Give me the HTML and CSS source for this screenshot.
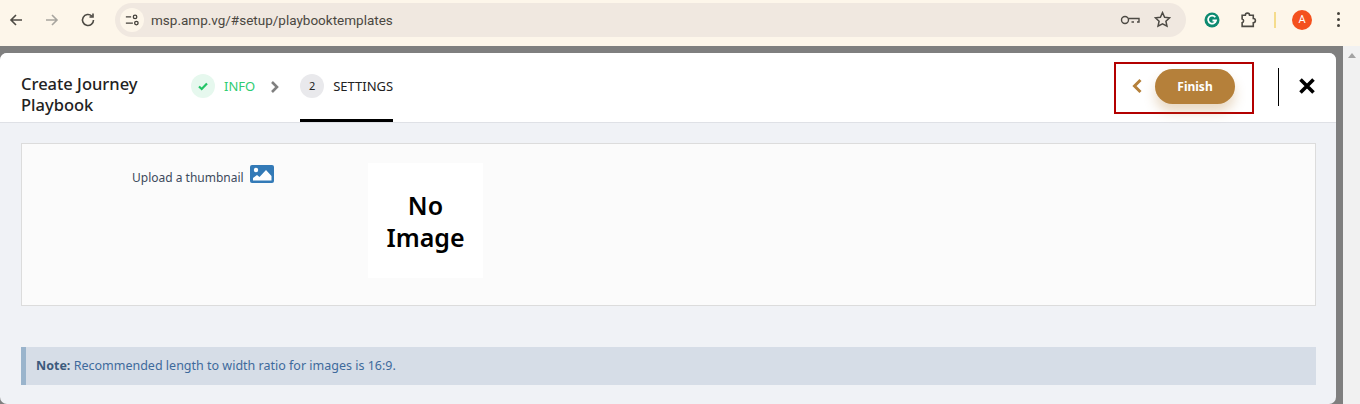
FILE: index.html
```html
<!DOCTYPE html>
<html lang="en">

<head>
  <meta charset="UTF-8">
  <title>Create Journey Playbook</title>
  <link rel="stylesheet" href="styles.css">
</head>

<body>
  <div class="browser-bar">
    <div class="nav-icons">
      <svg class="nav-icon" viewBox="0 0 16 16"><path d="M14 8H3M8 3 3 8l5 5" /></svg>
      <svg class="nav-icon faded" viewBox="0 0 16 16"><path d="M2 8h11M8 3l5 5-5 5" /></svg>
      <svg class="nav-icon" viewBox="0 0 16 16"><path d="M13.5 8A5.5 5.5 0 1 1 11.8 4M13 1.5V5H9.500" /></svg>
    </div>
    <div class="address">
      <span class="site-btn">
        <svg viewBox="0 0 16 16"><path d="M1 4.500h6M1 11.500h8" /><circle cx="11.500" cy="4.500" r="2" /><circle cx="13" cy="11.500" r="2" /></svg>
      </span>
      <span class="url">msp.amp.vg/#setup/playbooktemplates</span>
      <svg class="addr-icon key" viewBox="0 0 20 12"><circle cx="5" cy="6" r="3.500" /><path d="M8.500 4.500H19v3.500h-2M14 8h-2.500" /></svg>
      <svg class="addr-icon star" viewBox="0 0 16 16"><path d="m8 1.500 2 4.400 4.700.5-3.500 3.200 1 4.700L8 12l-4.200 2.300 1-4.700-3.500-3.200L6 5.900z" /></svg>
    </div>
    <div class="ext-icons">
      <svg class="grammarly" viewBox="0 0 16 16"><circle cx="8" cy="8" r="7.500" /><path d="M11.300 5.200A4 4 0 1 0 12 8.500H8.500" /></svg>
      <svg class="puzzle" viewBox="0 0 16 16"><path d="M2 4h3a2 2 0 0 1 4 0h3.500v3a2 2 0 0 1 0 4v3.500H2v-3.500a1.800 1.800 0 0 0 0-3.500z" /></svg>
      <span class="divider"></span>
      <span class="avatar">A</span>
      <span class="dots"><i></i><i></i><i></i></span>
    </div>
  </div>

  <div class="page">
    <div class="modal">
      <div class="modal-head">
        <div class="modal-title">Create Journey Playbook</div>
        <div class="steps">
          <div class="step done">
            <span class="step-badge">
              <svg viewBox="0 0 12 12"><path d="m2 6.500 2.700 2.500L10 3.500" /></svg>
            </span>
            INFO
          </div>
          <svg class="step-arrow" viewBox="0 0 10 14"><path d="m2 2 5 5-5 5" /></svg>
          <div class="step active">
            <span class="step-badge">2</span>
            SETTINGS
          </div>
        </div>
        <div class="head-actions">
          <div class="finish-box">
            <svg class="back" viewBox="0 0 12 16"><path d="M9.500 2 3.500 8l6 6" /></svg>
            <button type="button" class="finish">Finish</button>
          </div>
          <span class="head-sep"></span>
          <svg class="close" viewBox="0 0 18 18"><path d="m2.500 2.500 13 13M15.500 2.500l-13 13" /></svg>
        </div>
      </div>
      <div class="modal-body">
        <div class="card">
          <div class="upload">
            <span>Upload a thumbnail</span>
            <svg viewBox="0 0 24 18"><rect width="24" height="18" rx="2" class="pic-bg" /><circle cx="6" cy="5" r="2.200" class="pic-fg" /><path d="M3 15.500V13l4-3 2.500 2L16 5l5.500 6v4.500z" class="pic-fg" /></svg>
          </div>
          <div class="no-image">No Image</div>
        </div>
        <div class="note"><b>Note:</b> Recommended length to width ratio for images is 16:9.</div>
      </div>
    </div>
    <div class="scrollbar"><span class="scroll-up"></span></div>
  </div>
</body>

</html>
```

FILE: styles.css
```css
body {
  margin: 0;
  height: 404px;
  overflow: hidden;
  font-family: "Noto Sans", Arial, sans-serif;
  color: #212529;
}

/* Browser chrome */
.browser-bar {
  display: flex;
  align-items: center;
  height: 46px;
  box-sizing: border-box;
  padding: 0 0 7px 8px;
  background-color: #fdf6ea;
}

.nav-icons {
  display: flex;
  gap: 20px;
  width: 107px;
}

.nav-icon {
  width: 16px;
  height: 16px;
  fill: none;
  stroke: #4d4a44;
  stroke-width: 1.6;
}

.nav-icon.faded {
  stroke: #a8a59f;
}

.address {
  display: flex;
  align-items: center;
  width: 1071px;
  height: 34px;
  box-sizing: border-box;
  padding: 0 15px 0 5px;
  border-radius: 17px;
  background-color: #f0e8e0;
}

.site-btn {
  display: flex;
  align-items: center;
  justify-content: center;
  width: 24px;
  height: 24px;
  border-radius: 50%;
  background-color: #fdf6ea;
}

.site-btn svg {
  width: 14px;
  height: 14px;
  fill: none;
  stroke: #45423c;
  stroke-width: 1.5;
}

.url {
  flex: 1;
  margin-left: 7px;
  font-family: "Roboto", Arial, sans-serif;
  font-size: 13.500px;
  color: #4a4740;
}

.addr-icon {
  fill: none;
  stroke: #4d4a44;
  stroke-width: 1.4;
}

.addr-icon.key {
  width: 20px;
  height: 12px;
  margin-right: 14px;
}

.addr-icon.star {
  width: 17px;
  height: 17px;
}

.ext-icons {
  display: flex;
  align-items: center;
  margin-left: 18px;
}

.grammarly {
  width: 16px;
  height: 16px;
}

.grammarly circle {
  fill: #0d8a70;
}

.grammarly path {
  fill: none;
  stroke: #fff;
  stroke-width: 1.800;
}

.puzzle {
  width: 17px;
  height: 17px;
  margin-left: 20px;
  fill: none;
  stroke: #4d4a44;
  stroke-width: 1.500;
}

.divider {
  width: 2px;
  height: 16px;
  margin-left: 17px;
  background-color: #f5dc8c;
}

.avatar {
  width: 20px;
  height: 20px;
  margin-left: 16px;
  border-radius: 50%;
  background-color: #f4511e;
  color: #fff;
  font-family: "Roboto", Arial, sans-serif;
  font-size: 11px;
  line-height: 20px;
  text-align: center;
}

.dots {
  display: flex;
  flex-direction: column;
  gap: 3px;
  margin-left: 25px;
}

.dots i {
  width: 3px;
  height: 3px;
  border-radius: 50%;
  background-color: #45423c;
}

/* Dimmed page with the dialog on top */
.page {
  display: flex;
  height: 358px;
  background-color: #7f7f7f;
}

.modal {
  width: 1336px;
  height: 351px;
  margin: 7px 7px 0 0;
  flex-shrink: 0;
  box-sizing: border-box;
  margin-left: 0;
  border-radius: 7px;
  overflow: hidden;
  background-color: #f0f2f6;
}

.scrollbar {
  flex: 1;
  background-color: #f1f1f1;
  margin-top: 0;
}

.scroll-up {
  display: block;
  width: 0;
  margin: 7px auto 0;
  border-left: 4px solid transparent;
  border-right: 4px solid transparent;
  border-bottom: 5px solid #a3a3a3;
}

.modal-head {
  display: flex;
  height: 70px;
  box-sizing: border-box;
  padding-left: 21px;
  background-color: #fff;
  border-bottom: 1px solid #dfe1e6;
}

.modal-title {
  width: 170px;
  margin-top: 20px;
  font-size: 16.500px;
  font-weight: 500;
  line-height: 21px;
  color: #222;
}

.steps {
  display: flex;
  height: 69px;
}

.step {
  display: flex;
  align-items: center;
  gap: 9px;
  height: 69px;
  box-sizing: border-box;
  padding-bottom: 4px;
  font-size: 13px;
}

.step-badge {
  display: flex;
  align-items: center;
  justify-content: center;
  width: 24px;
  height: 24px;
  border-radius: 50%;
  font-size: 11px;
}

.step.done {
  color: #2ecc71;
}

.step.done .step-badge {
  background-color: #e6f8ee;
}

.step.done svg {
  width: 12px;
  height: 12px;
  fill: none;
  stroke: #22c466;
  stroke-width: 2.200;
}

.step-arrow {
  width: 10px;
  height: 14px;
  margin: 27px 20px 0 15px;
  fill: none;
  stroke: #808080;
  stroke-width: 2.600;
}

.step.active {
  border-bottom: 3px solid #000;
  padding-bottom: 1px;
  height: 69px;
  color: #222;
}

.step.active .step-badge {
  background-color: #e9e9ec;
}

.head-actions {
  display: flex;
  align-items: flex-start;
  margin-left: auto;
}

.finish-box {
  display: flex;
  align-items: center;
  width: 140px;
  height: 52px;
  box-sizing: border-box;
  margin-top: 9px;
  padding-left: 15px;
  border: 2px solid #b30000;
}

.back {
  width: 12px;
  height: 16px;
  margin-bottom: 4px;
  fill: none;
  stroke: #b5803a;
  stroke-width: 3;
}

.finish {
  width: 80px;
  height: 35px;
  margin: 0 0 4px 12px;
  padding: 0;
  border: none;
  border-radius: 18px;
  background-color: #b5803a;
  box-shadow: 0 8px 12px rgba(181, 128, 58, 0.3);
  color: #fff;
  font-family: "Noto Sans", Arial, sans-serif;
  font-size: 12px;
  font-weight: 700;
}

.head-sep {
  width: 1px;
  height: 38px;
  margin: 15px 0 0 24px;
  background-color: #000;
}

.close {
  width: 18px;
  height: 18px;
  margin: 24px 20px 0 19px;
  fill: none;
  stroke: #000;
  stroke-width: 3.600;
}

.modal-body {
  padding: 20px 20px 0 21px;
}

.card {
  display: flex;
  height: 163px;
  box-sizing: border-box;
  padding: 19px 0 0 110px;
  background-color: #fbfbfb;
  border: 1px solid #dcdcdc;
}

.upload {
  display: flex;
  align-items: flex-start;
  gap: 6px;
  width: 236px;
  font-size: 12px;
  color: #3d4a5c;
}

.upload span {
  margin-top: 6px;
}

.upload svg {
  width: 24px;
  height: 18px;
  margin-top: 2px;
}

.pic-bg {
  fill: #337ab7;
}

.pic-fg {
  fill: #fff;
}

.no-image {
  display: flex;
  align-items: center;
  justify-content: center;
  width: 115px;
  height: 115px;
  background-color: #fff;
  color: #000;
  font-size: 25px;
  font-weight: 600;
  line-height: 32px;
  text-align: center;
}

.note {
  height: 38px;
  margin-top: 41px;
  box-sizing: border-box;
  padding-left: 10px;
  background-color: #d6dde7;
  border-left: 5px solid #9ab4cc;
  color: #3e6a9c;
  font-size: 12.500px;
  line-height: 37px;
}

.note b {
  color: #3d5a7c;
}
```
